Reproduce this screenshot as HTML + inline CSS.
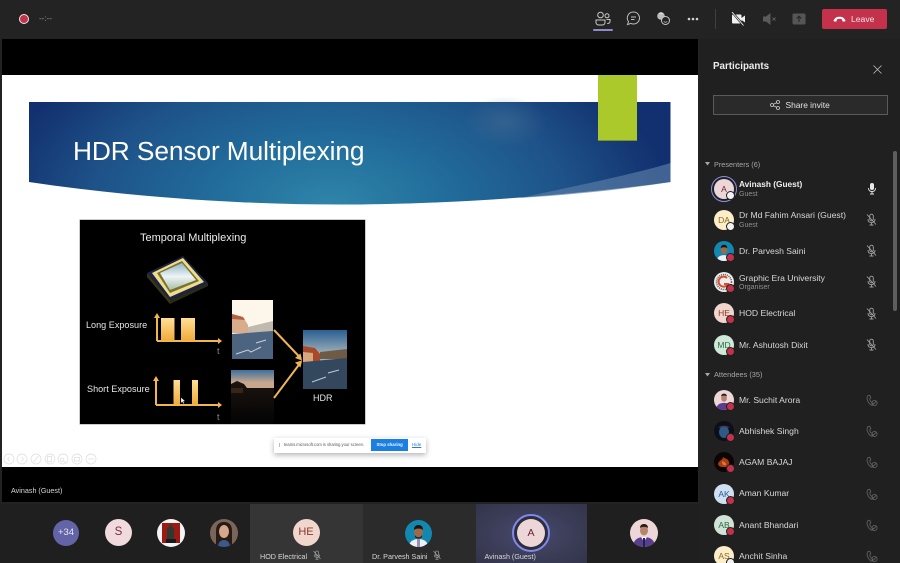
<!DOCTYPE html>
<html><head><meta charset="utf-8"><style>
html,body{margin:0;padding:0;background:#1f1f1f}
#p{position:relative;width:900px;height:563px;overflow:hidden;background:#222;font-family:"Liberation Sans",sans-serif;color:#e6e6e6}
#p div,#p svg{position:absolute}
.t{white-space:nowrap;line-height:1}
.n{left:739px;font-size:8.6px;color:#d8d8d8;white-space:nowrap;line-height:1}
.s{left:739px;font-size:7px;color:#8f8f8f;white-space:nowrap;line-height:1}
.a{left:714px;width:20px;height:20px;border-radius:50%;font-size:8.5px;line-height:20px;text-align:center}
.d{width:7px;height:7px;border-radius:50%;background:#c4314b;border:1px solid #1f1f1f;box-sizing:content-box;left:726px}
.w{background:#f2f2f2}
.m{left:865px;width:13px;height:13px}
.h{left:865px;width:13px;height:13px}
</style></head><body><div id="p">
<svg width="0" height="0" style="left:0;top:0"><defs>
<symbol id="mo" viewBox="0 0 13 13"><g fill="none" stroke="#a0a0a0" stroke-width=".9"><rect x="4.700" y="1.200" width="3.600" height="6.600" rx="1.800"/><path d="M3 6c0 2.400 1.500 3.600 3.500 3.600S10 8.400 10 6M6.500 9.600V12M4.500 12h4M2 1.500l9 10"/></g></symbol>
<symbol id="ph" viewBox="0 0 13 13"><g fill="none" stroke="#5f5f5f" stroke-width=".9"><path d="M3 1.500C1.700 3 1.700 6 3.500 8.500c1 1.400 2.300 2.500 3.500 2.800L8 9.600 6.300 8C5.500 7.500 4.800 6 4.800 4.800L5.800 3.700 4.700 1.200z"/><circle cx="9.500" cy="9" r="2.600"/><path d="M7.800 10.700l3.400-3.400"/></g></symbol>
</defs></svg>

<!-- top bar -->
<div style="left:0;top:0;width:900px;height:38px;background:#232323"></div>
<div style="left:18.500px;top:13.500px;width:8px;height:8px;border-radius:50%;background:#c4314b;border:1.500px solid #e8e8e8"></div>
<div class="t" style="left:39px;top:15px;font-size:8px;color:#9a9a9a">--:--</div>
<svg style="left:595px;top:11px" width="16" height="15" viewBox="0 0 16 15" fill="none" stroke="#c8c8c8" stroke-width="1"><circle cx="5.500" cy="4" r="2.800"/><circle cx="12" cy="4.800" r="2"/><path d="M1 9h9v2.500c0 1.500-1.300 2.500-3 2.500H4c-1.700 0-3-1-3-2.500zM11.500 8.500H15v2c0 1.300-1.200 2-2.800 2"/></svg>
<div style="left:593px;top:29px;width:20px;height:2px;background:#8b8cc7;border-radius:1px"></div>
<svg style="left:626px;top:11px" width="15" height="15" viewBox="0 0 15 15" fill="none" stroke="#bdbdbd" stroke-width="1"><path d="M7.500 1a6 6 0 1 1-2.600 11.400L1.500 13.600l1-3A6 6 0 0 1 7.500 1z"/><path d="M5 6h5M5 8.500h3.500"/></svg>
<svg style="left:656px;top:11px" width="14" height="15" viewBox="0 0 14 15"><circle cx="5" cy="5" r="3.800" fill="#bdbdbd"/><path d="M2.500 3l2.500 -2 2.500 2z" fill="#ddd"/><circle cx="9.500" cy="9.500" r="4" fill="#232323" stroke="#c8c8c8"/><path d="M7.800 10.500c1 1 2.400 1 3.400 0" stroke="#c8c8c8" fill="none" stroke-width=".8"/></svg>
<svg style="left:687px;top:17px" width="12" height="4" viewBox="0 0 12 4" fill="#d0d0d0"><circle cx="2" cy="2" r="1.300"/><circle cx="6" cy="2" r="1.300"/><circle cx="10" cy="2" r="1.300"/></svg>
<div style="left:715px;top:9px;width:1px;height:20px;background:#3f3f3f"></div>
<svg style="left:731px;top:12px" width="15" height="14" viewBox="0 0 15 14"><rect x="1" y="2.500" width="9.500" height="9" rx="1" fill="#f0f0f0"/><path d="M10.500 6l3.500-2.500v7L10.500 8z" fill="#f0f0f0"/><path d="M1.500 .5l11 13" stroke="#232323" stroke-width="2.200"/><path d="M1 0l11.500 13.500" stroke="#f0f0f0" stroke-width=".9"/></svg>
<svg style="left:762px;top:12px" width="15" height="14" viewBox="0 0 15 14"><path d="M1 4.500h3L8.500 1v12L4 9.500H1z" fill="#5b5b5b"/><path d="M10.500 5.500l3 3m0-3l-3 3" stroke="#5b5b5b" stroke-width=".9"/></svg>
<svg style="left:792px;top:13px" width="14" height="12" viewBox="0 0 14 12"><rect x=".5" y=".5" width="13" height="11" rx="1.500" fill="#555"/><path d="M7 9V3.500M4.800 5.500L7 3.200l2.200 2.300" stroke="#232323" stroke-width="1" fill="none"/></svg>
<div style="left:822px;top:9px;width:65px;height:20px;background:#c4314b;border-radius:2px"></div>
<svg style="left:833px;top:16px" width="13" height="6" viewBox="0 0 13 6"><path d="M.5 4.500C2 1.500 4 .7 6.500 .7s4.500 .8 6 3.800L12 5.500H9.500L9 3.300C7.500 2.800 5.500 2.800 4 3.300L3.500 5.500H1z" fill="#fff"/></svg>
<div class="t" style="left:851px;top:14.500px;font-size:8.600px;color:#f6e6e9">Leave</div>

<!-- stage -->
<div style="left:2px;top:39px;width:696px;height:463px;background:#000"></div>
<div style="left:2px;top:75px;width:696px;height:392px;background:#fff"></div>
<svg style="left:0;top:75px" width="700" height="140" viewBox="0 75 700 140">
<defs>
<radialGradient id="bg" gradientUnits="userSpaceOnUse" cx="330" cy="205" r="340" gradientTransform="translate(330 205) scale(1 .55) translate(-330 -205)">
<stop offset="0" stop-color="#2f85a9"/><stop offset=".35" stop-color="#216c9b"/><stop offset=".7" stop-color="#1e5288"/><stop offset="1" stop-color="#12306f"/></radialGradient>
<radialGradient id="gl"><stop offset="0" stop-color="#4b7398" stop-opacity=".45"/><stop offset="1" stop-color="#4b7398" stop-opacity="0"/></radialGradient>
</defs>
<path d="M29 102H670.500V182C560 197 440 204.500 340 204.500S130 197 29 182z" fill="url(#bg)"/>
<ellipse cx="505" cy="122" rx="42" ry="26" fill="url(#gl)"/>
<path d="M520 198C580 185 630 175 670.500 163V182C620 190 570 195 520 198z" fill="#5a7ea8" opacity=".65"/>
<rect x="598" y="75" width="39" height="65" fill="#acc92b"/>
<rect x="598" y="140" width="39" height="1" fill="#7b8f35"/>
</svg>
<div class="t" style="left:73px;top:138px;font-size:26.300px;color:#fff;letter-spacing:-.1px">HDR Sensor Multiplexing</div>

<!-- embedded slide picture -->
<div style="left:80px;top:220px;width:285px;height:204px;background:#000;box-shadow:0 0 0 .5px #999"></div>
<div class="t" style="left:140px;top:233px;font-size:11px;color:#ededed">Temporal Multiplexing</div>
<svg style="left:80px;top:220px" width="285" height="204" viewBox="80 220 285 204">
<defs>
<linearGradient id="bar" x1="0" y1="0" x2="0" y2="1"><stop offset="0" stop-color="#ffdf95"/><stop offset="1" stop-color="#f0ac3c"/></linearGradient>
<linearGradient id="sky" x1="0" y1="0" x2="0" y2="1"><stop offset="0" stop-color="#8fb4c6"/><stop offset=".5" stop-color="#eef4f6"/><stop offset="1" stop-color="#a8bfa8"/></linearGradient>
<linearGradient id="hsky" x1="0" y1="0" x2="0" y2="1"><stop offset="0" stop-color="#2a5f92"/><stop offset=".4" stop-color="#9fb0b8"/></linearGradient>
<linearGradient id="dsky" x1="0" y1="0" x2="0" y2="1"><stop offset="0" stop-color="#3d6f9e"/><stop offset=".7" stop-color="#c9a78c"/></linearGradient>
<linearGradient id="fade" x1="0" y1="0" x2="0" y2="1"><stop offset="0" stop-color="#1c1510"/><stop offset="1" stop-color="#030303"/></linearGradient>
</defs>
<polygon points="147,273 183,256 208,283 170,300" fill="#1c2347"/>
<polygon points="147,273 170,300 170,304 147,277" fill="#3a3515"/>
<polygon points="170,300 208,283 208,286 170,304" fill="#2b2a18"/>
<polygon points="152,273 183,258 204,282 170,297" fill="#eedd8a"/>
<polygon points="157,273 182,261 199,281 170,293" fill="#7a7030"/>
<polygon points="160,273 182,263 196,280 170,290" fill="url(#sky)"/>

<path d="M157 341V316" stroke="#f3b64c" stroke-width="2"/><path d="M154 318L157 313 160 318z" fill="#f3b64c"/>
<path d="M157 341H219" stroke="#f3b64c" stroke-width="2"/><path d="M218 338L222 341 218 344z" fill="#f3b64c"/>
<rect x="161" y="318" width="13.500" height="22" fill="url(#bar)"/><rect x="181" y="318" width="14" height="22" fill="url(#bar)"/>
<path d="M156 405V379" stroke="#f3b64c" stroke-width="2"/><path d="M153 381L156 376 159 381z" fill="#f3b64c"/>
<path d="M156 405H219" stroke="#f3b64c" stroke-width="2"/><path d="M218 402L222 405 218 408z" fill="#f3b64c"/>
<rect x="173.500" y="380" width="6.500" height="24" fill="url(#bar)"/><rect x="192" y="380" width="6" height="24" fill="url(#bar)"/>
<path d="M181 397.500v5.500l1.300-1.300 1.200 2 .8-.5-1.100-1.900 1.800-.2z" fill="#fff" stroke="#333" stroke-width=".3"/>

<!-- long exposure photo -->
<rect x="232" y="300" width="41" height="59" fill="#fdf6ea"/>
<path d="M232 314l11 3 5 8v8h-16z" fill="#d9ad8c"/><path d="M232 314l11 3 2 3-13-1z" fill="#b5603f"/>
<path d="M248 327l25-6v12l-25 1z" fill="#bfb9ae"/>
<path d="M232 334l41-3v28H232z" fill="#4d6480"/>
<path d="M236 354l12-4 3 2 10-5M256 343l10-3" stroke="#c9d2da" stroke-width="1" fill="none"/>
<!-- short exposure photo -->
<rect x="231" y="370" width="43" height="18" fill="url(#dsky)"/>
<path d="M231 384l6-3 7 3 3 4h27v36H231z" fill="url(#fade)"/>
<path d="M231 388l12 0v5h-12z" fill="#3a2318"/>
<!-- HDR photo -->
<rect x="303" y="330" width="44" height="59" fill="url(#hsky)"/>
<path d="M303 346l12 2 5 6v8h-17z" fill="#a8492a"/><path d="M303 352l10 1v9h-10z" fill="#d7a77f"/>
<path d="M320 352l27-3v10h-27z" fill="#6e5a45"/>
<path d="M303 362l44-4v31H303z" fill="#33475f"/>
<path d="M312 382l14-5M328 373l11-3" stroke="#bfc9d3" stroke-width="1"/>

<path d="M274 330L301 358.500M274 398L301 362" stroke="#f0b454" stroke-width="2" fill="none"/>
<path d="M295 358l7 2.500-1.500-7zM295 362.500l7-2-1.500 7z" fill="#f0b454"/>
</svg>
<div class="t" style="left:86px;top:321px;font-size:9.100px;color:#e6e6e6">Long Exposure</div>
<div class="t" style="left:87px;top:385px;font-size:9.100px;color:#e6e6e6">Short Exposure</div>
<div class="t" style="left:217px;top:347px;font-size:9px;color:#8a8a8a">t</div>
<div class="t" style="left:217px;top:413px;font-size:9px;color:#8a8a8a">t</div>
<div class="t" style="left:313px;top:394px;font-size:9px;color:#e6e6e6">HDR</div>

<!-- sharing bar -->
<div style="left:274px;top:438px;width:152px;height:15px;background:#fff;box-shadow:0 2px 6px rgba(0,0,0,.3)"></div>
<div style="left:278.500px;top:443px;width:1px;height:4px;background:#bbb"></div>
<div class="t" style="left:284px;top:443px;font-size:4.100px;color:#555">teams.microsoft.com is sharing your screen.</div>
<div style="left:371px;top:439px;width:37px;height:12px;background:#1a7fe0"></div>
<div class="t" style="left:376.500px;top:442.500px;font-size:4.300px;font-weight:bold;color:#f2f8ff">Stop sharing</div>
<div class="t" style="left:412px;top:442.500px;font-size:4.500px;color:#2a7ad0;text-decoration:underline">Hide</div>
<svg style="left:0;top:450px" width="100" height="18" viewBox="0 450 100 18" fill="none" stroke="#dcdcdc" stroke-width=".7"><circle cx="9" cy="459" r="5"/><circle cx="22" cy="459" r="5"/><circle cx="36" cy="459" r="5"/><circle cx="50" cy="459" r="5"/><circle cx="63" cy="459" r="5"/><circle cx="77" cy="459" r="5"/><circle cx="91" cy="459" r="5"/><path d="M9.500 457l-2 2 2 2M21.500 457l2 2-2 2M33.500 462l5-6M47.500 456.500h4v5h-4zM62 458a1.800 1.800 0 1 0 .1 0M64 461l2 2M74.500 457.500h5v3.500h-5zM88 459h6"/></svg>

<div class="t" style="left:11px;top:486.500px;font-size:7.200px;color:#d6d6d6">Avinash (Guest)</div>

<!-- bottom strip -->
<div style="left:0;top:504px;width:700px;height:59px;background:#1f1f1f"></div>
<div style="left:250px;top:504px;width:113px;height:59px;background:#353535"></div>
<div style="left:363px;top:504px;width:113px;height:59px;background:#2b2b2b"></div>
<div style="left:476px;top:504px;width:111px;height:59px;background:radial-gradient(ellipse at 55px 30px,#474a6c 0,#3a3c56 60%,#33344a 100%)"></div>

<div style="left:53px;top:520px;width:26px;height:26px;border-radius:50%;background:#6264a7;text-align:center;line-height:26px;font-size:9.500px;color:#e8e8f4">+34</div>
<div style="left:105px;top:519px;width:27px;height:27px;border-radius:50%;background:#f0dadd;text-align:center;line-height:27px;font-size:11.500px;color:#7a2d3b">S</div>
<svg style="left:157px;top:519px" width="28" height="28" viewBox="0 0 28 28"><circle cx="14" cy="14" r="14" fill="#f4f4f4"/><rect x="5" y="4" width="18" height="20" fill="#9c1a14"/><path d="M10 23V10l4-5 3 5v13z" fill="#2e3a30"/><rect x="9" y="20" width="10" height="4" fill="#18181b"/></svg>
<svg style="left:210px;top:519px" width="28" height="28" viewBox="0 0 28 28"><defs><clipPath id="c4"><circle cx="14" cy="14" r="14"/></clipPath></defs><g clip-path="url(#c4)"><rect width="28" height="28" fill="#7a6658"/><path d="M6 28V12C6 5 10 3 14 3s8 2 8 9v16z" fill="#2a1a16"/><ellipse cx="14" cy="12.500" rx="5" ry="6.500" fill="#d3a88f"/><path d="M8 28c0-5 3-7 6-7s6 2 6 7z" fill="#3a5a8c"/></g></svg>
<div style="left:292.500px;top:519px;width:27px;height:27px;border-radius:50%;background:#f1d6cd;text-align:center;line-height:27px;font-size:11px;color:#8a3a2a">HE</div>
<svg style="left:405px;top:520px" width="27" height="27" viewBox="0 0 27 27"><defs><clipPath id="c5"><circle cx="13.500" cy="13.500" r="13.500"/></clipPath></defs><g clip-path="url(#c5)"><rect width="27" height="27" fill="#1288b0"/><path d="M4 27c0-6 5-8 9.500-8s9.500 2 9.500 8z" fill="#eef0f4"/><rect x="12" y="19" width="3" height="8" fill="#9a90b5"/><ellipse cx="13.500" cy="12" rx="4.500" ry="5.500" fill="#9b6a4b"/><path d="M9 10c0-4 2.500-5 4.500-5s4.500 1 4.500 5c-2-2-7-2-9 0z" fill="#1a1412"/><path d="M10 15c1 3 6 3 7 0v2c-1 2-6 2-7 0z" fill="#2a1d18"/></g></svg>
<div style="left:512px;top:514px;width:38px;height:38px;border-radius:50%;border:2px solid #8188ee;box-sizing:border-box;background:#2d2e3c"></div>
<div style="left:517px;top:519px;width:28px;height:28px;border-radius:50%;background:#ecd6d8;text-align:center;line-height:28px;font-size:10.500px;color:#6a2433">A</div>
<svg style="left:630px;top:519px" width="28" height="28" viewBox="0 0 28 28"><defs><clipPath id="c6"><circle cx="14" cy="14" r="14"/></clipPath></defs><g clip-path="url(#c6)"><rect width="28" height="28" fill="#edd6d8"/><path d="M3 28c0-8 6-10 11-10s11 2 11 10z" fill="#5b3d90"/><path d="M11 18l3 5 3-5z" fill="#f0f0f5"/><rect x="13" y="19" width="2" height="9" fill="#22224a"/><ellipse cx="14" cy="11.500" rx="4" ry="5" fill="#b5846a"/><path d="M10 9c0-3 2-4 4-4s4 1 4 4c-2-1.500-6-1.500-8 0z" fill="#2a1c18"/></g></svg>
<div class="t" style="left:260px;top:552.500px;font-size:7.200px;color:#d8d8d8">HOD Electrical</div>
<svg style="left:312px;top:550px" width="10" height="10"><use href="#mo"/></svg>
<div class="t" style="left:372px;top:552.500px;font-size:7.200px;color:#d8d8d8">Dr. Parvesh Saini</div>
<svg style="left:432px;top:550px" width="10" height="10"><use href="#mo"/></svg>
<div class="t" style="left:484.500px;top:552.500px;font-size:7.200px;color:#d8d8d8">Avinash (Guest)</div>

<!-- side panel -->
<div style="left:700px;top:39px;width:200px;height:524px;background:#202020"></div>
<div class="t" style="left:713px;top:62px;font-size:9.800px;font-weight:bold;color:#ececec">Participants</div>
<svg style="left:873px;top:65px" width="9" height="9" viewBox="0 0 9 9" stroke="#bdbdbd" stroke-width=".8"><path d="M.5 .5l8 8m0-8l-8 8"/></svg>
<div style="left:713px;top:95px;width:175px;height:20px;box-sizing:border-box;border:1px solid #5a5a5a;background:#2a2a2a"></div>
<svg style="left:770px;top:100px" width="10" height="10" viewBox="0 0 10 10" fill="none" stroke="#d0d0d0" stroke-width=".8"><circle cx="2" cy="5" r="1.500"/><circle cx="8" cy="2" r="1.500"/><circle cx="8" cy="8" r="1.500"/><path d="M3.300 4.300l3.400-1.700M3.300 5.700l3.400 1.700"/></svg>
<div class="t" style="left:785.500px;top:101px;font-size:8.400px;color:#e3e3e3">Share invite</div>
<div style="left:893px;top:151px;width:4px;height:160px;border-radius:2px;background:#5e5e5e"></div>

<svg style="left:705px;top:161.500px" width="5" height="4" viewBox="0 0 5 4"><path d="M0 0h5L2.500 3.500z" fill="#a8a8a8"/></svg>
<div class="t" style="left:714px;top:160.500px;font-size:7.300px;color:#a6a6a6">Presenters (6)</div>
<svg style="left:705px;top:373px" width="5" height="4" viewBox="0 0 5 4"><path d="M0 0h5L2.500 3.500z" fill="#a8a8a8"/></svg>
<div class="t" style="left:714px;top:371px;font-size:7.400px;color:#a6a6a6">Attendees (35)</div>

<!-- presenters -->
<div style="left:711px;top:176px;width:26px;height:26px;border-radius:50%;border:1px solid #8b90e8;box-sizing:border-box"></div>
<div class="a" style="top:179px;background:#ecd6d8;color:#6a2433">A</div><div class="d w" style="top:191px"></div>
<div class="n" style="top:180px;color:#f0f0f0;font-weight:bold;font-size:8.300px">Avinash (Guest)</div><div class="s" style="top:191px">Guest</div>
<svg style="left:866px;top:182px" width="12" height="13" viewBox="0 0 12 13" fill="none"><rect x="4" y="1" width="4" height="7" rx="2" fill="#e8e8e8"/><path d="M2.500 6c0 2.500 1.500 3.500 3.500 3.500S9.500 8.500 9.500 6M6 9.500V12M4 12h4" stroke="#e8e8e8" stroke-width=".9"/></svg>

<div class="a" style="top:210px;background:#fbeec8;color:#8a6a1f">DA</div><div class="d w" style="top:222px"></div>
<div class="n" style="top:211px">Dr Md Fahim Ansari (Guest)</div><div class="s" style="top:222px">Guest</div>
<svg class="m" style="top:213px"><use href="#mo"/></svg>

<svg style="left:714px;top:241px" width="20" height="20" viewBox="0 0 27 27"><defs><clipPath id="c7"><circle cx="13.500" cy="13.500" r="13.500"/></clipPath></defs><g clip-path="url(#c7)"><rect width="27" height="27" fill="#1288b0"/><path d="M4 27c0-6 5-8 9.500-8s9.500 2 9.500 8z" fill="#eef0f4"/><ellipse cx="13.500" cy="12" rx="4.500" ry="5.500" fill="#9b6a4b"/><path d="M9 10c0-4 2.500-5 4.500-5s4.500 1 4.500 5c-2-2-7-2-9 0z" fill="#1a1412"/></g></svg>
<div class="d" style="top:253px"></div>
<div class="n" style="top:246.500px">Dr. Parvesh Saini</div>
<svg class="m" style="top:244px"><use href="#mo"/></svg>

<svg style="left:714px;top:272px" width="20" height="20" viewBox="0 0 20 20"><circle cx="10" cy="10" r="10" fill="#eee"/><circle cx="10" cy="10" r="7.500" fill="none" stroke="#555" stroke-width="1.500" stroke-dasharray="1 1"/><path d="M13 6a5 5 0 1 0 1 6H10" fill="none" stroke="#d9502e" stroke-width="2"/></svg>
<div class="d" style="top:284px"></div>
<div class="n" style="top:273.500px">Graphic Era University</div><div class="s" style="top:284px">Organiser</div>
<svg class="m" style="top:275px"><use href="#mo"/></svg>

<div class="a" style="top:303px;background:#f1d6cd;color:#8a3a2a">HE</div><div class="d" style="top:315px"></div>
<div class="n" style="top:309px">HOD Electrical</div>
<svg class="m" style="top:307px"><use href="#mo"/></svg>

<div class="a" style="top:335px;background:#cfe9d8;color:#2f6b46">MD</div><div class="d" style="top:347px"></div>
<div class="n" style="top:340.500px">Mr. Ashutosh Dixit</div>
<svg class="m" style="top:338px"><use href="#mo"/></svg>

<!-- attendees -->
<svg style="left:714px;top:390px" width="20" height="20" viewBox="0 0 28 28"><defs><clipPath id="c8"><circle cx="14" cy="14" r="14"/></clipPath></defs><g clip-path="url(#c8)"><rect width="28" height="28" fill="#edd6d8"/><path d="M3 28c0-8 6-10 11-10s11 2 11 10z" fill="#5b3d90"/><ellipse cx="14" cy="11.500" rx="4" ry="5" fill="#b5846a"/><path d="M10 9c0-3 2-4 4-4s4 1 4 4c-2-1.500-6-1.500-8 0z" fill="#2a1c18"/></g></svg>
<div class="d" style="top:402px"></div>
<div class="n" style="top:395.500px">Mr. Suchit Arora</div>
<svg class="h" style="top:394px"><use href="#ph"/></svg>

<svg style="left:714px;top:421px" width="20" height="20" viewBox="0 0 20 20"><circle cx="10" cy="10" r="10" fill="#0c0f18"/><ellipse cx="10" cy="11" rx="5" ry="6" fill="#2f5a88"/><path d="M4 7c2-3 10-3 12 0-3-1-9-1-12 0z" fill="#4a3a50"/></svg>
<div class="d" style="top:433px"></div>
<div class="n" style="top:426.500px">Abhishek Singh</div>
<svg class="h" style="top:425px"><use href="#ph"/></svg>

<svg style="left:714px;top:452px" width="20" height="20" viewBox="0 0 20 20"><circle cx="10" cy="10" r="10" fill="#0a0605"/><path d="M4 12c2-5 4-3 5-7 2 2 5 1 6 5 1 3-2 6-5 5-3 0-5 0-6-3z" fill="#a83d15"/><path d="M8 9c2 1 4 1 4 4-2 1-4 0-4-4z" fill="#e27a2d"/></svg>
<div class="d" style="top:464px"></div>
<div class="n" style="top:458px">AGAM BAJAJ</div>
<svg class="h" style="top:456px"><use href="#ph"/></svg>

<div class="a" style="top:484px;background:#cfe0f2;color:#2c5a8c">AK</div><div class="d" style="top:496px"></div>
<div class="n" style="top:489px">Aman Kumar</div>
<svg class="h" style="top:488px"><use href="#ph"/></svg>

<div class="a" style="top:515px;background:#cfe3d6;color:#2f6b46">AB</div><div class="d" style="top:527px"></div>
<div class="n" style="top:520.500px">Anant Bhandari</div>
<svg class="h" style="top:519px"><use href="#ph"/></svg>

<div class="a" style="top:546px;background:#fbeec8;color:#8a6a1f">AS</div><div class="d w" style="top:558px"></div>
<div class="n" style="top:552px">Anchit Sinha</div>
<svg class="h" style="top:550px"><use href="#ph"/></svg>
</div></body></html>
